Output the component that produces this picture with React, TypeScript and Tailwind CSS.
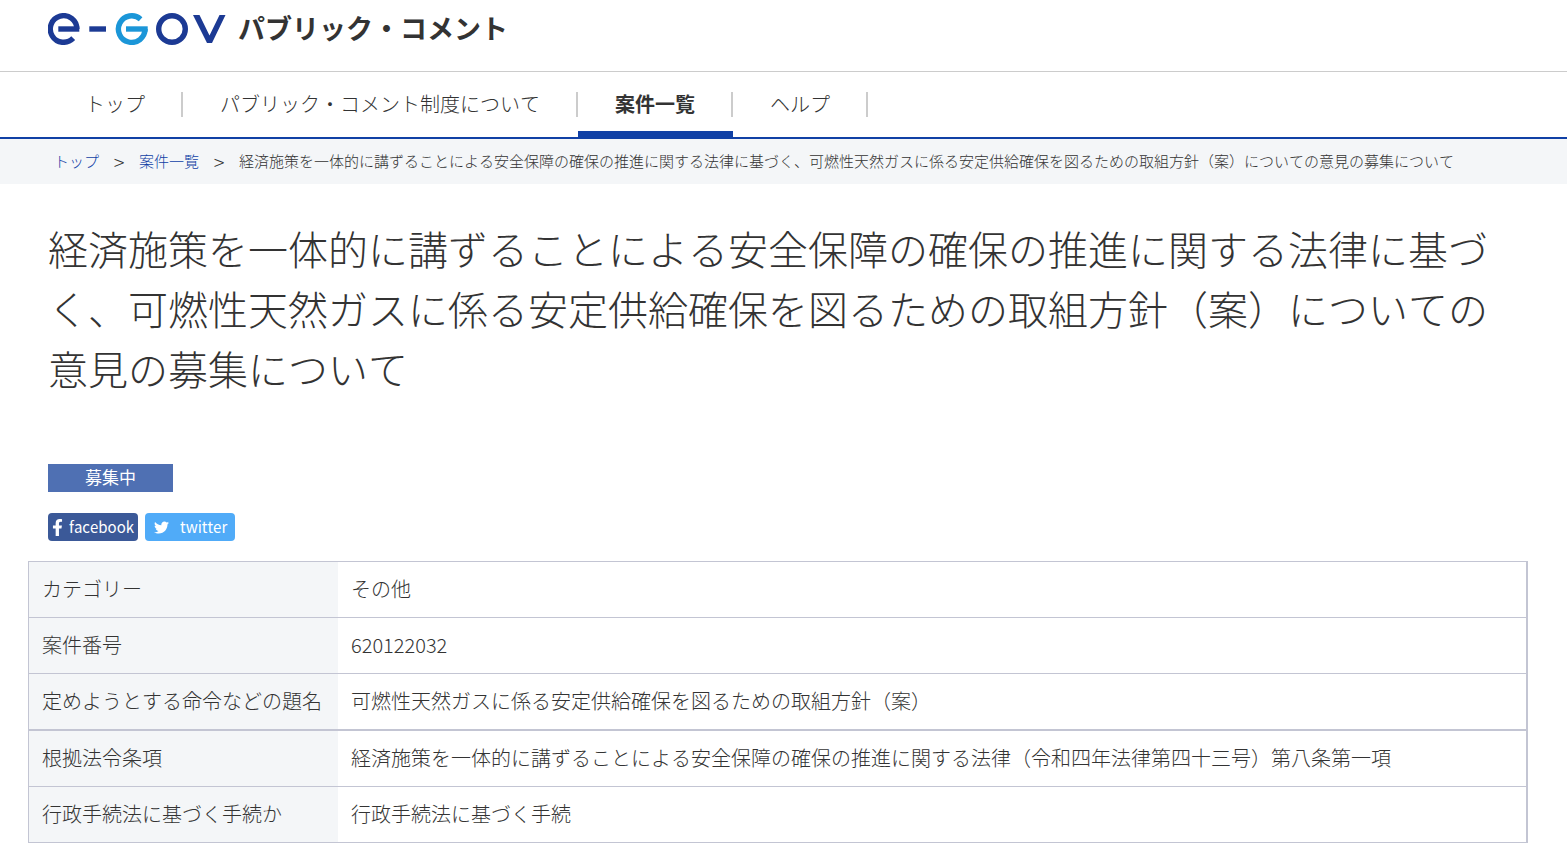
import { FaFacebookF, FaTwitter } from "react-icons/fa";

const CASE_TITLE =
  "経済施策を一体的に講ずることによる安全保障の確保の推進に関する法律に基づく、可燃性天然ガスに係る安定供給確保を図るための取組方針（案）についての意見の募集について";

const NAV = [
  { label: "トップ", active: false },
  { label: "パブリック・コメント制度について", active: false },
  { label: "案件一覧", active: true },
  { label: "ヘルプ", active: false },
];

const ROWS = [
  { label: "カテゴリー", value: "その他" },
  { label: "案件番号", value: "620122032" },
  { label: "定めようとする命令などの題名", value: "可燃性天然ガスに係る安定供給確保を図るための取組方針（案）", thick: true },
  { label: "根拠法令条項", value: "経済施策を一体的に講ずることによる安全保障の確保の推進に関する法律（令和四年法律第四十三号）第八条第一項" },
  { label: "行政手続法に基づく手続か", value: "行政手続法に基づく手続" },
];

function Logo() {
  return (
    <svg viewBox="0 0 178 32" className="h-8 w-[178px]" role="img" aria-label="e-Gov">
      <g fill="none" strokeWidth="5.4">
        <path d="M28.9 16A13.3 13.3 0 1 0 25.2 25.2" stroke="#1c3a94" />
        <path d="M10.3 16H31.3" stroke="#1c3a94" />
        <path d="M41.3 16H58" stroke="#1c3a94" />
        <path d="M92.6 6.2A13.3 13.3 0 1 0 97 16" stroke="#1b96d8" />
        <path d="M78 16H99.7" stroke="#1b96d8" />
        <circle cx="124" cy="16" r="13.3" stroke="#1c3a94" />
      </g>
      <path d="M145 2h6.500l10 20.500L171.500 2h6L164 30h-5z" fill="#1c3a94" />
    </svg>
  );
}

export default function App() {
  return (
    <div className="bg-white font-['Noto_Sans_CJK_JP',sans-serif] font-light text-[#333] [font-kerning:none]">
      <header>
        <div className="flex h-[72px] items-start gap-3 border-b border-[#ccc] px-12 pt-[13px]">
          <a href="#"><Logo /></a>
          <span className="text-[27px] leading-[30px] font-bold">パブリック・コメント</span>
        </div>
        <nav className="border-b-2 border-[#1040a5] px-12">
          <ul className="flex">
            {NAV.map((item) => (
              <li
                key={item.label}
                className={`border-b-[6px] pt-5 pb-[14px] ${item.active ? "border-[#1040a5] font-bold" : "border-transparent"}`}
              >
                <a href="#" className="block border-r-2 border-[#ccc] pr-9 pb-0.5 pl-[37px] text-xl leading-[23px]">
                  {item.label}
                </a>
              </li>
            ))}
          </ul>
        </nav>
      </header>

      <nav aria-label="パンくず" className="bg-[#f4f6f8] px-[54px]">
        <ol className="flex h-[45px] items-center text-[15px] whitespace-nowrap">
          <li><a href="#" className="text-[#1040a5]">トップ</a></li>
          <li className="w-10 text-center text-xl leading-5">&gt;</li>
          <li><a href="#" className="text-[#1040a5]">案件一覧</a></li>
          <li className="w-10 text-center text-xl leading-5">&gt;</li>
          <li>{CASE_TITLE}</li>
        </ol>
      </nav>

      <main className="pt-[34px]">
        <div className="px-12">
          <h1 className="text-[40px] leading-[60px]">{CASE_TITLE}</h1>
          <p className="mt-[66px] w-[125px] bg-[#4f70b3] pb-0.5 text-center text-[17px] leading-[26px] font-normal text-white">募集中</p>
          <div className="mt-[21px] flex gap-[7px] text-[15px] leading-7 font-normal text-white">
            <a href="#" className="flex h-7 w-[90px] items-center gap-[3px] rounded bg-[#3b5998] pl-px">
              <FaFacebookF size={17} />
              facebook
            </a>
            <a href="#" className="flex h-7 w-[90px] items-center gap-[11px] rounded bg-[#50abf8] pl-[9px]">
              <FaTwitter size={15} />
              twitter
            </a>
          </div>
        </div>

        <div className="mt-5 mr-[39px] ml-7">
          <table className="w-full border-separate border-spacing-0 border-t border-r-2 border-l border-[#c3c5d3] text-left text-xl leading-[30px]">
            <tbody>
              {ROWS.map((row) => (
                <tr key={row.label} className={row.thick ? "h-[57px]" : "h-14"}>
                  <th scope="row" className={`w-[309px] border-[#c3c5d3] bg-[#f4f6f8] pb-0.5 pl-[13px] font-light ${row.thick ? "border-b-2" : "border-b"}`}>
                    {row.label}
                  </th>
                  <td className={`border-[#c3c5d3] pb-0.5 pl-[13px] ${row.thick ? "border-b-2" : "border-b"}`}>{row.value}</td>
                </tr>
              ))}
            </tbody>
          </table>
        </div>
      </main>
    </div>
  );
}
